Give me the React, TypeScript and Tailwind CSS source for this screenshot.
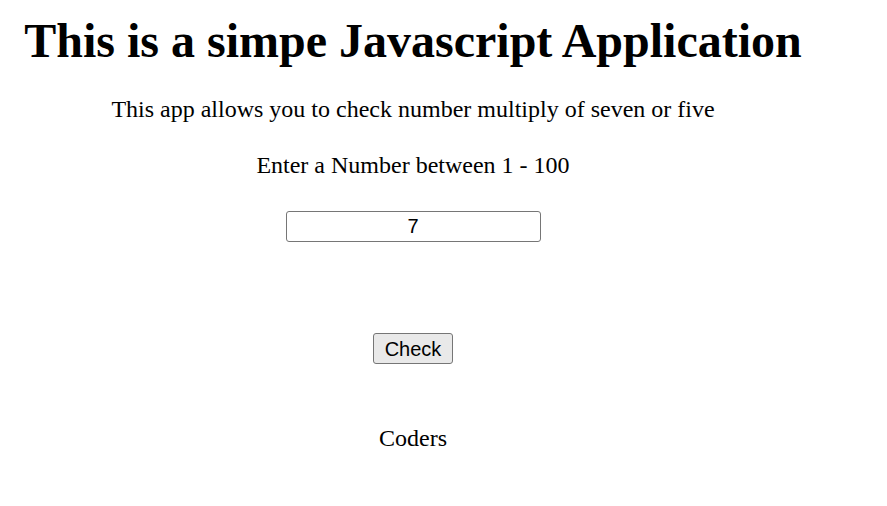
export default function App() {
  return (
    <div className="min-h-screen bg-white text-black">
      <div className="w-[826px] flex flex-col items-center text-center font-['Liberation_Serif',serif]">
        <h1 className="mt-[13px] text-[48px] leading-[56px] font-bold whitespace-nowrap">
          This is a simpe Javascript Application
        </h1>
        <p className="mt-[26px] text-[24px] leading-[28px]">
          This app allows you to check number multiply of seven or five
        </p>
        <p className="mt-[28px] text-[24px] leading-[28px]">Enter a Number between 1 - 100</p>
        <input
          type="text"
          defaultValue="7"
          className="mt-[32px] w-[255px] h-[31px] border border-[#767676] rounded-[3px] text-center text-[20px] font-['Liberation_Sans',Arial,sans-serif] outline-none"
        />
        <button className="mt-[91px] w-[80px] h-[31px] bg-[#e9e9e9] border border-[#767676] rounded-[3px] text-[20px] font-['Liberation_Sans',Arial,sans-serif]">
          Check
        </button>
        <p className="mt-[60px] text-[24px] leading-[28px]">Coders</p>
      </div>
    </div>
  )
}
